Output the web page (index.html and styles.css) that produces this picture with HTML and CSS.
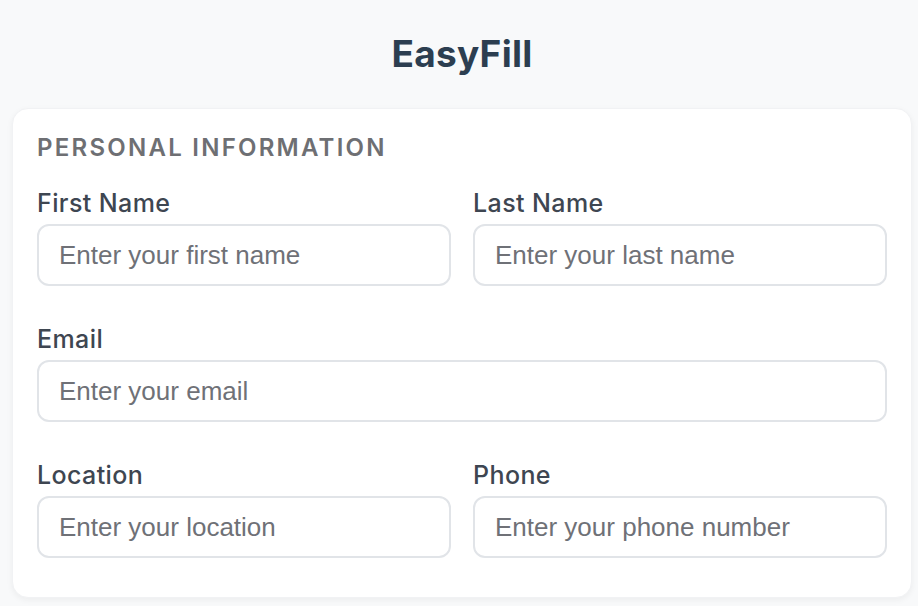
FILE: index.html
```html
<!DOCTYPE html>
<html lang="en">
<head>
<meta charset="utf-8">
<title>EasyFill</title>
<link rel="stylesheet" href="styles.css">
</head>
<body>
<div class="app">
  <h1 class="title">EasyFill</h1>
  <section class="card">
    <h2 class="section-title">Personal Information</h2>
    <div class="grid">
      <div class="field">
        <label class="label" for="first">First Name</label>
        <input class="input" id="first" type="text" placeholder="Enter your first name">
      </div>
      <div class="field">
        <label class="label" for="last">Last Name</label>
        <input class="input" id="last" type="text" placeholder="Enter your last name">
      </div>
      <div class="field full">
        <label class="label" for="email">Email</label>
        <input class="input" id="email" type="email" placeholder="Enter your email">
      </div>
      <div class="field">
        <label class="label" for="loc">Location</label>
        <input class="input" id="loc" type="text" placeholder="Enter your location">
      </div>
      <div class="field">
        <label class="label" for="phone">Phone</label>
        <input class="input" id="phone" type="tel" placeholder="Enter your phone number">
      </div>
    </div>
  </section>
</div>
</body>
</html>
```
FILE: styles.css
```css
* { box-sizing: border-box; }
html, body { margin: 0; padding: 0; }
body {
  background: #f8f9fa;
  font-family: Inter, "Noto Sans", "Liberation Sans", sans-serif;
  height: 606px;
  overflow: hidden;
}
.app {
  padding: 32px 6px 0 12px;
}
.title {
  margin: 0;
  text-align: center;
  font-size: 37px;
  line-height: 44px;
  font-weight: 700;
  letter-spacing: 0.3px;
  color: #2c3e50;
}
.card {
  margin-top: 32px;
  width: 900px;
  background: #ffffff;
  border: 1px solid #f1f2f4;
  border-radius: 16px;
  padding: 24px 24px 39px 24px;
  box-shadow: 0 2px 6px rgba(0, 0, 0, 0.05);
}
.section-title {
  margin: 0 0 25px 0;
  font-size: 24px;
  line-height: 30px;
  font-weight: 600;
  letter-spacing: 2.25px;
  text-transform: uppercase;
  color: #6e6f73;
}
.grid {
  display: grid;
  grid-template-columns: 1fr 1fr;
  column-gap: 22px;
  row-gap: 38px;
}
.field {
  display: flex;
  flex-direction: column;
  gap: 6px;
}
.field.full { grid-column: 1 / -1; }
.label {
  font-size: 25px;
  line-height: 30px;
  font-weight: 500;
  letter-spacing: 0.4px;
  color: #3e4651;
}
.input {
  height: 62px;
  width: 100%;
  border: 2px solid #e1e4e8;
  border-radius: 12px;
  padding: 0 20px;
  font-family: "Liberation Sans", Arial, sans-serif;
  font-size: 26px;
  color: #2c3e50;
  background: #ffffff;
  outline: none;
}
.input::placeholder {
  color: #6f7177;
  opacity: 1;
}
```
